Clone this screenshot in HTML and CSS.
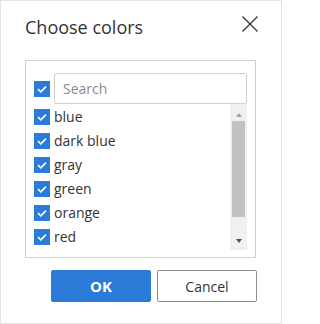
FILE: index.html
```html
<!DOCTYPE html>
<html>
<head>
<meta charset="utf-8">
<link rel="stylesheet" href="styles.css">
</head>
<body>
<div class="dialog">
  <div class="header">
    <div class="title">Choose colors</div>
    <svg class="close" width="16" height="16" viewBox="0 0 16 16"><path d="M0.5 0.5 L15.5 15.5 M15.5 0.5 L0.5 15.5" stroke="#333" stroke-width="1.3" fill="none"/></svg>
  </div>
  <div class="panel">
    <div class="search-row">
      <span class="cb"><svg width="16" height="16" viewBox="0 0 16 16"><path d="M4 8.2 L6.8 10.8 L12 5.6" stroke="#fff" stroke-width="1.6" fill="none"/></svg></span>
      <div class="search">Search</div>
    </div>
    <div class="list">
      <div class="items">
        <div class="item"><span class="cb"><svg width="16" height="16" viewBox="0 0 16 16"><path d="M4 8.2 L6.8 10.8 L12 5.6" stroke="#fff" stroke-width="1.6" fill="none"/></svg></span><span class="label">blue</span></div>
        <div class="item"><span class="cb"><svg width="16" height="16" viewBox="0 0 16 16"><path d="M4 8.2 L6.8 10.8 L12 5.6" stroke="#fff" stroke-width="1.6" fill="none"/></svg></span><span class="label">dark blue</span></div>
        <div class="item"><span class="cb"><svg width="16" height="16" viewBox="0 0 16 16"><path d="M4 8.2 L6.8 10.8 L12 5.6" stroke="#fff" stroke-width="1.6" fill="none"/></svg></span><span class="label">gray</span></div>
        <div class="item"><span class="cb"><svg width="16" height="16" viewBox="0 0 16 16"><path d="M4 8.2 L6.8 10.8 L12 5.6" stroke="#fff" stroke-width="1.6" fill="none"/></svg></span><span class="label">green</span></div>
        <div class="item"><span class="cb"><svg width="16" height="16" viewBox="0 0 16 16"><path d="M4 8.2 L6.8 10.8 L12 5.6" stroke="#fff" stroke-width="1.6" fill="none"/></svg></span><span class="label">orange</span></div>
        <div class="item"><span class="cb"><svg width="16" height="16" viewBox="0 0 16 16"><path d="M4 8.2 L6.8 10.8 L12 5.6" stroke="#fff" stroke-width="1.6" fill="none"/></svg></span><span class="label">red</span></div>
      </div>
      <div class="scrollbar">
        <div class="arrow-up"></div>
        <div class="thumb"></div>
        <div class="arrow-down"></div>
      </div>
    </div>
  </div>
  <div class="buttons">
    <div class="btn ok">OK</div>
    <div class="btn cancel">Cancel</div>
  </div>
</div>
</body>
</html>
```
FILE: styles.css
```css
html, body {
  margin: 0;
  padding: 0;
  background: #fff;
}
body {
  font-family: "Open Sans", "Noto Sans", sans-serif;
  color: #333;
}
.dialog {
  width: 282px;
  height: 324px;
  box-sizing: border-box;
  border: 1px solid #e3e3e3;
  padding: 0 25px 0 24px;
}
.header {
  height: 59px;
  box-sizing: border-box;
  padding-top: 14px;
  display: flex;
  justify-content: space-between;
  align-items: flex-start;
}
.title {
  font-size: 18px;
  line-height: 24px;
  color: #333;
}
.close {
  display: block;
  margin-top: 1px;
  margin-right: -2px;
}
.panel {
  border: 1px solid #cfcfcf;
  padding: 12px 8px 7px 8px;
}
.search-row {
  display: flex;
  align-items: center;
  gap: 4px;
}
.cb {
  width: 16px;
  height: 16px;
  background: #2b7bd9;
  display: block;
  flex: none;
}
.cb svg {
  display: block;
}
.search {
  flex: 1;
  height: 31px;
  box-sizing: border-box;
  border: 1px solid #cfcfcf;
  border-radius: 2px;
  padding-left: 8px;
  font-size: 14px;
  line-height: 29px;
  color: #8a8a8a;
}
.list {
  display: flex;
  height: 146px;
}
.items {
  flex: 1;
}
.item {
  height: 24px;
  display: flex;
  align-items: center;
  gap: 4px;
  padding-top: 2px;
  box-sizing: border-box;
}
.label {
  font-size: 14px;
  line-height: 20px;
  color: #333;
}
.scrollbar {
  width: 17px;
  background: #f0f0f0;
  display: flex;
  flex-direction: column;
  align-items: center;
}
.arrow-up {
  margin-top: 9px;
  width: 0;
  height: 0;
  border-left: 3.5px solid transparent;
  border-right: 3.5px solid transparent;
  border-bottom: 4px solid #a3a3a3;
}
.thumb {
  margin-top: 4px;
  width: 13px;
  height: 96px;
  background: #c1c1c1;
}
.arrow-down {
  margin-top: 22px;
  width: 0;
  height: 0;
  border-left: 3.5px solid transparent;
  border-right: 3.5px solid transparent;
  border-top: 4px solid #505050;
}
.buttons {
  display: flex;
  justify-content: flex-end;
  gap: 6px;
  margin-top: 12px;
  margin-right: -1px;
}
.btn {
  width: 100px;
  height: 32px;
  box-sizing: border-box;
  border-radius: 2px;
  font-size: 14px;
  display: flex;
  align-items: center;
  justify-content: center;
}
.ok {
  background: #2b7bd9;
  color: #fff;
  font-weight: bold;
  font-size: 15px;
}
.cancel {
  border: 1px solid #8f8f8f;
  color: #333;
}
```
